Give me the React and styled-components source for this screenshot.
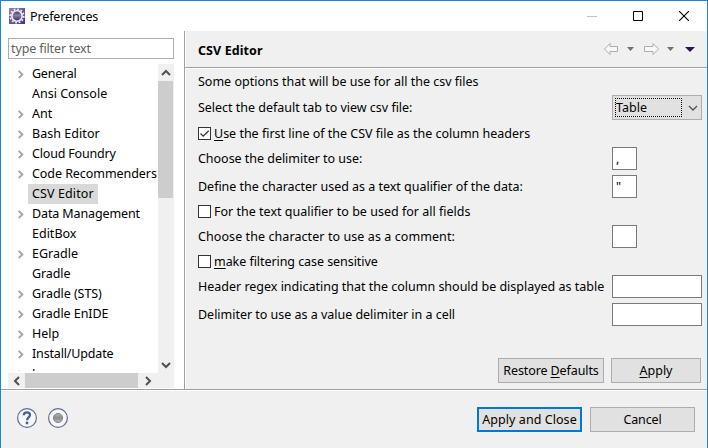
import React from 'react';
import styled, { createGlobalStyle } from 'styled-components';

const GlobalStyle = createGlobalStyle`
  *, *::before, *::after { box-sizing: border-box; }
  body { margin: 0; background: #f0f0f0; }
`;

const Dialog = styled.div`
  width: 708px;
  height: 448px;
  display: flex;
  flex-direction: column;
  border: 1px solid #1883d7;
  border-bottom: 0;
  background: #f0f0f0;
  color: #000;
  font: 12.5px/17px 'Noto Sans', 'Open Sans', sans-serif;
  white-space: nowrap;
  overflow: hidden;
`;

const TitleBar = styled.header`
  flex: none;
  height: 30px;
  display: flex;
  align-items: center;
  padding-left: 8px;
  background: #fff;
`;

const Title = styled.span`
  flex: 1;
  margin-left: 5px;
  letter-spacing: -0.13px;
`;

const WindowButton = styled.span`
  width: 46px;
  height: 30px;
  display: flex;
  align-items: center;
  justify-content: center;
`;

const Body = styled.div`
  flex: none;
  height: 358px;
  display: flex;
`;

const Sidebar = styled.aside`
  width: 183px;
  padding: 7px 10px 0 7px;
  background: #fff;
  display: flex;
  flex-direction: column;
`;

const FilterBox = styled.div`
  flex: none;
  width: 166px;
  height: 21px;
  padding: 1px 2px;
  border: 1px solid #abadb3;
  color: #606060;
  letter-spacing: -0.13px;
`;

const TreeFrame = styled.div`
  flex: none;
  height: 324px;
  margin-top: 5px;
  display: grid;
  grid-template: 309px 15px / 150px 16px;
`;

const Tree = styled.ul`
  height: 307px;
  margin: 0;
  padding: 0;
  list-style: none;
  overflow: hidden;
`;

const TreeItem = styled.li`
  height: 20px;
  display: flex;
  align-items: center;
  padding-left: 8px;
`;

const Twistie = styled.span`
  flex: none;
  width: 12px;
  height: 20px;
  display: flex;
  align-items: center;
`;

const TreeLabel = styled.span`
  height: 20px;
  padding: 1px 4px 0;
  background: ${(p) => (p.$selected ? '#d9d9d9' : 'transparent')};
  letter-spacing: ${(p) => p.$spacing || 0}px;
`;

const VerticalBar = styled.div`
  grid-row: span 2;
  display: flex;
  flex-direction: column;
  background: #f0f0f0;
`;

const HorizontalBar = styled.div`
  display: flex;
  background: #f0f0f0;
`;

const ScrollArrow = styled.span`
  flex: none;
  width: ${(p) => p.$w}px;
  height: ${(p) => p.$h}px;
  display: flex;
  align-items: center;
  justify-content: center;
`;

const VerticalThumb = styled.span`
  width: 15px;
  height: 117px;
  background: #cdcdcd;
`;

const VerticalTrack = styled.span`
  height: 158px;
`;

const HorizontalThumb = styled.span`
  width: 113px;
  background: #cdcdcd;
`;

const Page = styled.main`
  flex: 1;
  border-left: 1px solid #a0a0a0;
  box-shadow: inset 1px 0 #fff;
  display: flex;
  flex-direction: column;
`;

const PageHeader = styled.div`
  flex: none;
  height: 37px;
  padding: 0 12px 0 13px;
  display: flex;
  align-items: center;
  border-bottom: 1px solid #a0a0a0;
  box-shadow: 0 1px #fff;
`;

const PageTitle = styled.h1`
  flex: 1;
  margin: 2px 0 0;
  font-size: 12.5px;
  line-height: 17px;
  font-weight: 700;
  letter-spacing: 0.09px;
`;

const Form = styled.div`
  flex: 1;
  padding: 5px 5px 0 13px;
  display: grid;
  grid-template-columns: 414px 90px;
  grid-auto-rows: max-content;
  row-gap: 5px;
  align-items: center;
`;

const FieldLabel = styled.span`
  height: 17px;
  letter-spacing: ${(p) => p.$spacing || 0}px;
`;

const CheckLine = styled.div`
  grid-column: span 2;
  height: 17px;
  display: flex;
  align-items: center;
  letter-spacing: ${(p) => p.$spacing || 0}px;
`;

const CheckBox = styled.span`
  flex: none;
  width: 13px;
  height: 13px;
  margin-right: 3px;
  border: 1px solid #333;
  background: #fff;
  display: flex;
`;

const Intro = styled(FieldLabel)`
  grid-column: span 2;
`;

const Mnemonic = styled.span`
  text-decoration: underline;
  text-decoration-thickness: 1px;
  text-underline-offset: 2px;
  text-decoration-skip-ink: none;
`;

const TextField = styled.div`
  width: ${(p) => p.$width}px;
  height: 23px;
  padding: 2px 3px;
  border: 1px solid #7a7a7a;
  background: #fff;
`;

const Select = styled.div`
  width: 90px;
  height: 25px;
  border: 1px solid #adadad;
  background: #e1e1e1;
  display: flex;
  align-items: center;
  padding-left: 2px;
`;

const SelectValue = styled.span`
  width: 67px;
  height: 19px;
  border: 1px dotted #000;
  line-height: 18px;
`;

const SelectArrow = styled.span`
  flex: 1;
  display: flex;
  justify-content: center;
  padding-left: 3px;
`;

const PageButtons = styled.div`
  flex: none;
  display: flex;
  justify-content: flex-end;
  gap: 7px;
  padding: 0 6px 6px 0;
`;

const Button = styled.button`
  width: ${(p) => p.$width}px;
  height: 25px;
  padding: 0 0 1px;
  border: ${(p) => (p.$primary ? '2px solid #0078d7' : '1px solid #adadad')};
  background: #e1e1e1;
  color: #000;
  font: inherit;
  letter-spacing: ${(p) => p.$spacing || 0}px;
`;

const Footer = styled.footer`
  flex: 1;
  display: flex;
  align-items: flex-start;
  padding: 17px 12px 0 15px;
  border-top: 1px solid #a0a0a0;
  box-shadow: inset 0 1px #fff;
`;

const FooterIcons = styled.div`
  flex: 1;
  display: flex;
  gap: 9px;
`;

const FooterButtons = styled.div`
  display: flex;
  gap: 8px;
`;

const Icon = styled.svg`
  display: block;
  flex: none;
`;

const EclipseIcon = () => (
  <Icon width="16" height="16" viewBox="0 0 16 16">
    <defs>
      <linearGradient id="tile" x1="0" y1="0" x2="1" y2="1">
        <stop offset="0" stopColor="#8d82b4" />
        <stop offset="1" stopColor="#473378" />
      </linearGradient>
      <linearGradient id="globe" x1="0" y1="0" x2="0" y2="1">
        <stop offset="0" stopColor="#37315f" />
        <stop offset="0.45" stopColor="#8582a8" />
        <stop offset="1" stopColor="#2c2255" />
      </linearGradient>
    </defs>
    <rect width="16" height="16" fill="url(#tile)" />
    <circle cx="8" cy="8" r="6.7" fill="none" stroke="#eeeef2" strokeWidth="1.8" strokeDasharray="1.75 1.75" />
    <circle cx="8" cy="8" r="5.2" fill="url(#globe)" stroke="#eeedf2" strokeWidth="1.6" />
  </Icon>
);

const chevrons = {
  up: 'M1 7L5 3L9 7',
  down: 'M1 3L5 7L9 3',
  left: 'M7 1L3 5L7 9',
  right: 'M3 1L7 5L3 9',
};

const Chevron = ({ dir, color = '#505050', size = 10, weight = 2 }) => (
  <Icon width={size} height={size} viewBox="0 0 10 10">
    <path d={chevrons[dir]} fill="none" stroke={color} strokeWidth={weight} />
  </Icon>
);

const HistoryNav = () => (
  <Icon width="92" height="14" viewBox="0 0 92 14">
    <g fill="#f8f8f8" stroke="#adadad" strokeLinejoin="round">
      <path d="M1.5 7L7 1.5V4.5H14.5V9.5H7V12.5Z" />
      <path d="M55.5 7L50 1.5V4.5H41.5V9.5H50V12.5Z" />
    </g>
    <path d="M24 5H31L27.5 9Z" fill="#6f6f74" />
    <path d="M64 5H71L67.5 9Z" fill="#6f6f74" />
    <path d="M82 5H92L87 10Z" fill="#2c1252" />
  </Icon>
);

const tree = [
  ['General', true, -0.23],
  ['Ansi Console', false, 0],
  ['Ant', true, 0],
  ['Bash Editor', true, 0.05],
  ['Cloud Foundry', true, -0.18],
  ['Code Recommenders', true, -0.06],
  ['CSV Editor', false, 0.12],
  ['Data Management', true, -0.12],
  ['EditBox', false, 0],
  ['EGradle', true, 0],
  ['Gradle', false, -0.1],
  ['Gradle (STS)', true, -0.05],
  ['Gradle EnIDE', true, -0.07],
  ['Help', true, 0],
  ['Install/Update', true, -0.16],
  ['Java', true, 0],
];

export default function App() {
  return (
    <>
      <GlobalStyle />
      <Dialog>
        <TitleBar>
          <EclipseIcon />
          <Title>Preferences</Title>
          <WindowButton>
            <Icon width="10" height="10"><path d="M0 5.5H10" stroke="#c4c4c4" /></Icon>
          </WindowButton>
          <WindowButton>
            <Icon width="10" height="10"><path d="M.5 .5H9.5V9.5H.5Z" fill="none" stroke="#000" /></Icon>
          </WindowButton>
          <WindowButton>
            <Icon width="10" height="10"><path d="M0 0L10 10M10 0L0 10" stroke="#000" strokeWidth="1.1" /></Icon>
          </WindowButton>
        </TitleBar>
        <Body>
          <Sidebar>
            <FilterBox>type filter text</FilterBox>
            <TreeFrame>
              <Tree>
                {tree.map(([name, expandable, spacing]) => (
                  <TreeItem key={name}>
                    <Twistie>
                      {expandable && <Chevron dir="right" color="#a6a6a6" size={9} weight={2.2} />}
                    </Twistie>
                    <TreeLabel $selected={name === 'CSV Editor'} $spacing={spacing}>{name}</TreeLabel>
                  </TreeItem>
                ))}
              </Tree>
              <VerticalBar>
                <ScrollArrow $w={15} $h={17}><Chevron dir="up" /></ScrollArrow>
                <VerticalThumb />
                <VerticalTrack />
                <ScrollArrow $w={15} $h={17}><Chevron dir="down" /></ScrollArrow>
              </VerticalBar>
              <HorizontalBar>
                <ScrollArrow $w={17} $h={15}><Chevron dir="left" /></ScrollArrow>
                <HorizontalThumb />
                <ScrollArrow $w={20} $h={15}><Chevron dir="right" /></ScrollArrow>
              </HorizontalBar>
            </TreeFrame>
          </Sidebar>
          <Page>
            <PageHeader>
              <PageTitle>CSV Editor</PageTitle>
              <HistoryNav />
            </PageHeader>
            <Form>
              <Intro>Some options that will be use for all the csv files</Intro>
              <FieldLabel $spacing={-0.02}>Select the default tab to view csv file:</FieldLabel>
              <Select>
                <SelectValue>Table</SelectValue>
                <SelectArrow><Chevron dir="down" weight={1.3} /></SelectArrow>
              </Select>
              <CheckLine $spacing={-0.01}>
                <CheckBox>
                  <Icon width="11" height="11"><path d="M1.5 5.5L4.2 8.2L9.7 2.7" fill="none" stroke="#333" strokeWidth="1.3" /></Icon>
                </CheckBox>
                <span><Mnemonic>U</Mnemonic>se the first line of the CSV file as the column headers</span>
              </CheckLine>
              <FieldLabel $spacing={-0.03}>Choose the delimiter to use:</FieldLabel>
              <TextField $width={25}>,</TextField>
              <FieldLabel $spacing={-0.02}>Define the character used as a text qualifier of the data:</FieldLabel>
              <TextField $width={25}>"</TextField>
              <CheckLine $spacing={0.01}>
                <CheckBox />
                <span>For the text qualifier to be used for all fields</span>
              </CheckLine>
              <FieldLabel $spacing={0.08}>Choose the character to use as a comment:</FieldLabel>
              <TextField $width={25} />
              <CheckLine $spacing={-0.06}>
                <CheckBox />
                <span><Mnemonic>m</Mnemonic>ake filtering case sensitive</span>
              </CheckLine>
              <FieldLabel $spacing={-0.01}>Header regex indicating that the column should be displayed as table</FieldLabel>
              <TextField $width={90} />
              <FieldLabel $spacing={-0.02}>Delimiter to use as a value delimiter in a cell</FieldLabel>
              <TextField $width={90} />
            </Form>
            <PageButtons>
              <Button $width={106} $spacing={-0.1}>Restore <Mnemonic>D</Mnemonic>efaults</Button>
              <Button $width={90}><Mnemonic>A</Mnemonic>pply</Button>
            </PageButtons>
          </Page>
        </Body>
        <Footer>
          <FooterIcons>
            <Icon width="22" height="22">
              <circle cx="11" cy="11" r="9.4" fill="#f7f8fa" stroke="#5b6f94" strokeWidth="1.2" />
              <path d="M7.7 8.2C7.9 4.4 14.1 4.5 14 8C13.9 10.3 11.1 10.6 11.1 13.2" fill="none" stroke="#4b6291" strokeWidth="2.3" />
              <circle cx="11" cy="16" r="1.4" fill="#4b6291" />
            </Icon>
            <Icon width="22" height="22">
              <defs>
                <linearGradient id="record" x1="0" y1="0" x2="0" y2="1">
                  <stop offset="0" stopColor="#b0b0b0" />
                  <stop offset="0.5" stopColor="#8c8c8c" />
                  <stop offset="1" stopColor="#bababa" />
                </linearGradient>
              </defs>
              <circle cx="11" cy="11" r="9.4" fill="#f7f8fa" stroke="#5b6f94" strokeWidth="1.2" />
              <circle cx="11" cy="11" r="4.6" fill="url(#record)" stroke="#868686" />
            </Icon>
          </FooterIcons>
          <FooterButtons>
            <Button $width={105} $primary $spacing={0.06}>Apply and Close</Button>
            <Button $width={105} $spacing={-0.15}>Cancel</Button>
          </FooterButtons>
        </Footer>
      </Dialog>
    </>
  );
}
